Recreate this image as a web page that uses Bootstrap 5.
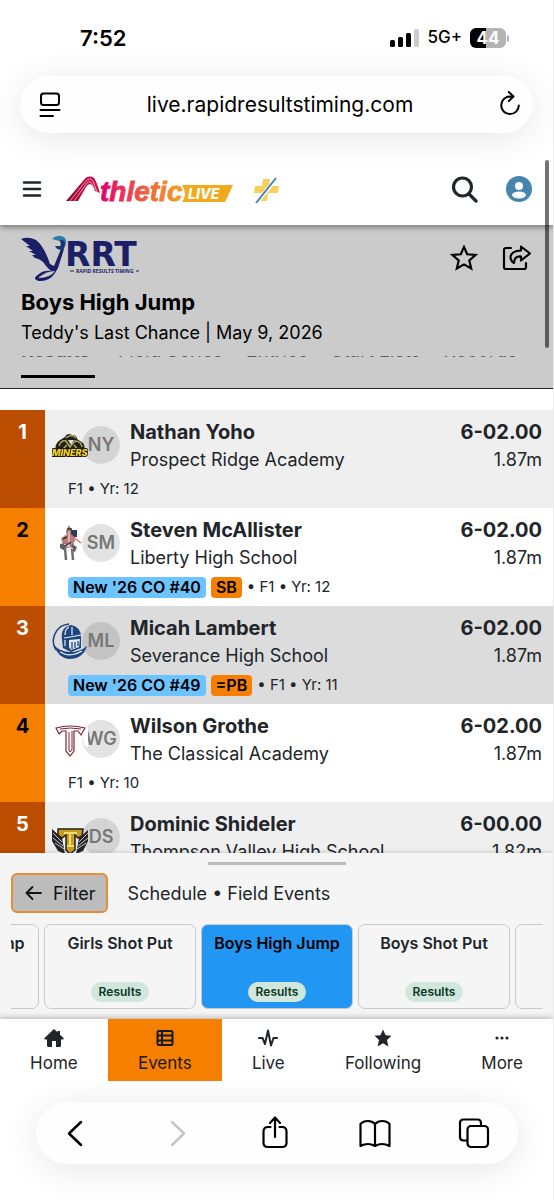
<!DOCTYPE html>
<html lang="en">
<head>
<meta charset="utf-8">
<meta name="viewport" content="width=device-width, initial-scale=1">
<title>Boys High Jump – AthleticLIVE</title>
<link href="https://cdn.jsdelivr.net/npm/bootstrap@5.3.0/dist/css/bootstrap.min.css" rel="stylesheet">
<style>
:root { --orange: #f77f00; --rust: #bb4d00; }
body { font-family: Inter, "Liberation Sans", sans-serif; color: #212529; background: #fff; height: 100vh; overflow: hidden; border-right: 1px solid #e9e9e9; }
svg { display: block; flex: none; }
button { background: none; border: 0; padding: 0; color: inherit; }
a { color: inherit; text-decoration: none; }
.status { height: 76px; padding: 0 44px 0 80px; color: #000; }
.clock { font-size: 22px; font-weight: 600; }
.signal { font-size: 17px; font-weight: 500; }
.battery { width: 36px; height: 20px; border-radius: 6px; background: linear-gradient(90deg, #000 44%, #b4b4b4 44%); color: #fff; font-size: 17px; line-height: 20px; font-weight: 700; text-align: center; }
.battery-tip { width: 2px; height: 7px; border-radius: 0 2px 2px 0; background: #b4b4b4; margin-left: 1px; }
.pill { border-radius: 32px; background: #fefefe; box-shadow: 0 5px 36px rgba(0,0,0,.1); color: #000; }
.address { height: 57px; margin: 0 20px; padding: 0 12px 0 19px; position: relative; }
.address input { border: 0; background: none; text-align: center; font-size: 21px; min-width: 0; color: #000; padding: 0; outline: 0; }
.appbar { height: 73px; margin-top: 19px; padding: 0 21px 0 22px; box-shadow: 0 2px 6px rgba(0,0,0,.45); clip-path: inset(0 0 -10px 0); position: relative; z-index: 2; }
.meet { background: #cbcbcb; border-bottom: 1px solid #222; color: #000; padding: 10px 22px 0 21px; }
.meet h1 { font-size: 22px; line-height: 30px; font-weight: 700; margin: 5px 0 0; }
.meet p { font-size: 18px; line-height: 28px; margin: 2px 0 0; }
.tabs { height: 32px; margin-top: 9px; overflow: hidden; gap: 23px; font-size: 19px; }
.tabs a { height: 22px; line-height: 22px; flex: none; }
.tabs span { display: block; height: 3px; overflow: hidden; opacity: .55; }
.tabs span b { display: block; font-weight: 400; line-height: 22px; margin-top: -16px; }
.tabs .current { border-bottom: 3px solid #000; min-width: 74px; }
.tabs .current b { font-weight: 700; }
.results { flex: 1 1 0; min-height: 0; overflow: hidden; padding-top: 21px; }
.entry { height: 98px; background: #fff; }
.entry:nth-child(odd) { background: #efefef; }
.entry:nth-child(3) { background: #dcdcdc; }
.place { width: 45px; background: var(--orange); color: #000; font-size: 20px; line-height: 28px; font-weight: 700; text-align: center; padding-top: 8px; }
.entry:nth-child(odd) .place { background: var(--rust); color: #fff; }
.who { padding: 8px 11px 4px 7px; min-width: 0; }
.pair { width: 78px; height: 56px; padding-top: 8px; }
.pair svg { position: relative; z-index: 1; }
.initials { width: 38px; height: 38px; margin-left: -6px; border-radius: 50%; background: rgba(0,0,0,.11); color: #777; font-size: 18px; font-weight: 600; line-height: 38px; text-align: center; }
.athlete, .height-mark { font-size: 20px; line-height: 28px; font-weight: 700; }
.team, .metric { font-size: 18px; line-height: 28px; }
.facts { height: 30px; margin-left: 16px; font-size: 15px; gap: 5px; }
.tag { font-size: 16px; font-weight: 600; line-height: 21px; border-radius: 4px; padding: 0 5px; color: #000; background: #6cc3ff; }
.tag-best { background: var(--orange); }
.drawer { background: #f5f5f5; padding: 9px 10px 10px 11px; box-shadow: 0 -1px 4px rgba(0,0,0,.14); position: relative; }
.grip { width: 138px; height: 3px; background: #bdbdc0; }
.filter { height: 40px; border: 2px solid #e88d35; border-radius: 6px; background: #bcbcbc; font-size: 18px; padding: 0 10px 0 12px; gap: 11px; color: #111; }
.crumbs { font-size: 18px; margin-left: 20px; }
.strip { gap: 5px; overflow: hidden; margin-top: 11px; }
.event { flex: 0 0 152px; height: 85px; border: 1px solid #c9c9cc; border-radius: 7px; padding: 5px 0 6px; font-size: 16px; line-height: 26px; font-weight: 600; }
.event.active { background: #2196f3; color: #000; }
.state { font-size: 12px; line-height: 20px; border-radius: 10px; background: #d1e7dd; color: #0a3622; padding: 0 8px; }
.bottomnav { box-shadow: 0 -1px 6px rgba(0,0,0,.3); clip-path: inset(-10px 0 0 0); position: relative; background: #fff; }
.bottomnav a { flex: 1 1 auto; height: 62px; padding-top: 10px; font-size: 17px; line-height: 24px; gap: 4px; }
.bottomnav .active { background: var(--orange); color: #16191c; }
.browserbar { height: 62px; margin: 21px 35px 36px 36px; padding: 0 28px 0 24px; flex: none; }
.browserbar button { width: 32px; display: flex; justify-content: center; }
.thumb { position: absolute; right: 4px; top: 160px; width: 4px; height: 188px; border-radius: 2px; background: rgba(0,0,0,.55); z-index: 5; }
</style>
</head>
<body class="d-flex flex-column position-relative">
<div class="thumb"></div>
<div class="status d-flex align-items-center justify-content-between flex-shrink-0">
  <span class="clock">7:52</span>
  <div class="signal d-flex align-items-center">
    <svg width="29" height="20" viewBox="0 0 29 20"><rect y="12" width="5" height="7" rx="1.5"/><rect x="8" y="9" width="5" height="10" rx="1.5"/><rect x="16" y="5" width="5" height="14" rx="1.5"/><rect x="24" y="1" width="5" height="18" rx="1.5" fill="#ccc"/></svg>
    <span class="mx-2">5G+</span>
    <div class="battery">44</div><div class="battery-tip"></div>
  </div>
</div>
<div class="address pill d-flex align-items-center flex-shrink-0">
  <button aria-label="Page menu"><svg width="22" height="26" viewBox="0 0 22 26" fill="none" stroke="#000" stroke-width="2" stroke-linecap="round"><rect x="2" y="1.500" width="18" height="11.500" rx="2.500"/><path d="M1.500 18H20.500M1.500 24H14"/></svg></button>
  <input class="flex-grow-1" type="text" aria-label="Address" value="live.rapidresultstiming.com">
  <button aria-label="Reload"><svg width="22" height="28" viewBox="0 0 22 28" fill="none" stroke="#000" stroke-width="2" stroke-linecap="round" stroke-linejoin="round"><path d="M11 5.500A8.800 8.800 0 1 0 19.800 14.500M8 5.700L13.500 5.500M9.800 1L14.500 5.500L9.800 10"/></svg></button>
</div>

<header class="appbar d-flex align-items-center flex-shrink-0">
  <button aria-label="Menu"><svg width="20" height="18" viewBox="0 0 20 18" stroke="#212529" stroke-width="2.500" stroke-linecap="round"><path d="M2 2.500H18M2 9H18M2 15.500H18"/></svg></button>
  <a href="#" class="ms-4" aria-label="AthleticLIVE">
    <svg width="168" height="30" viewBox="66 174 168 30">
      <defs><linearGradient id="word" gradientUnits="userSpaceOnUse" x1="100" x2="183"><stop offset="0" stop-color="#e2006d"/><stop offset=".5" stop-color="#ee5b45"/><stop offset="1" stop-color="#f0a322"/></linearGradient><linearGradient id="peak"><stop offset="0" stop-color="#96062e"/><stop offset="1" stop-color="#d5104c"/></linearGradient></defs>
      <path d="M66 201L83 181Q88 174 94 178Q96 180 100 193L95 191Q92 184 90 184Q88 184 86 187L78 201Z" fill="url(#peak)"/>
      <path d="M70 201L86 181Q90 177 93 181L97 192M74 201L87 183Q90 180 92 184L95 190" fill="none" stroke="#fff" stroke-width=".6"/>
      <text x="100" y="201" font-family="Liberation Sans, Arial, sans-serif" font-size="28" font-weight="700" font-style="italic" fill="url(#word)" stroke="url(#word)" stroke-width=".8">thletic</text>
      <path d="M182 185H233L225 202H182Q188 194 182 185Z" fill="#f2a91c"/>
      <text x="188" y="199" font-family="Inter, sans-serif" font-size="14" font-weight="800" font-style="italic" fill="#fff">LIVE</text>
    </svg>
  </a>
  <a href="#" class="ms-3 ps-1" aria-label="Plus"><svg width="26" height="28" viewBox="0 0 26 28"><path d="M9 4H16L15 11H25L24 18H14L13 26H7L8 18H0L1 11H8Z" fill="#f7cf5b"/><path d="M2 28L23 3" stroke="#fff" stroke-width="4"/><path d="M2 28L22 3" stroke="#4682b4" stroke-width="2"/></svg></a>
  <button class="ms-auto" aria-label="Search"><svg width="28" height="28" viewBox="0 0 28 28" fill="none" stroke="#212529" stroke-width="3.200" stroke-linecap="round"><circle cx="12.500" cy="12" r="9"/><path d="M19 19L26 26"/></svg></button>
  <button class="ms-4" aria-label="Account"><svg class="ms-1" width="26" height="26" viewBox="0 0 26 26"><circle cx="13" cy="13" r="13" fill="#4685ad"/><circle cx="13" cy="10" r="4" fill="#fff"/><ellipse cx="13" cy="19" rx="7" ry="3.500" fill="#fff"/></svg></button>
</header>

<section class="meet flex-shrink-0">
  <div class="d-flex">
    <svg width="120" height="47" viewBox="20 235 120 47" role="img" aria-label="Rapid Results Timing">
      <path d="M20 239Q27 236 35 240Q43 246 49 264L53 266L60 249L63 249L57 268L54 273Q48 282 38 281Q30 279 38 274Q43 270 50 271L45 266Q41 259 34 258L31 255H35L28 251H32L25 246H29Z" fill="#1b1f68"/>
      <path d="M38 277Q46 271 54 271Q49 278 38 278Z" fill="#cbcbcb"/>
      <path d="M51 239Q58 233 64 238Q67 243 62 250L56 249Q54 247 59 246L62 242Z" fill="#287cab"/><path d="M59 240Q67 239 62 250Q56 250 54 246L60 246Z" fill="#1b3371"/>
      <text x="64" y="266" font-family="DejaVu Sans, sans-serif" font-size="33" font-weight="700" fill="#1b1f68">RRT</text>
      <text x="75" y="273" font-family="Open Sans, sans-serif" font-size="5" font-weight="700" fill="#1b1f68">RAPID RESULTS TIMING</text>
      <path d="M69 271H73M135 271H138" stroke="#1b1f68"/>
    </svg>
    <button class="ms-auto" aria-label="Follow"><svg width="28" height="28" viewBox="0 0 28 28" fill="none" stroke="#000" stroke-width="2.200"><path d="M14 2L17.200 9.300L25.500 10L19.300 15.500L21.200 23.500L14 19.400L6.800 23.500L8.700 15.500L2.500 10L10.800 9.300Z"/></svg></button>
    <button class="ms-4" aria-label="Share"><svg width="29" height="28" viewBox="0 0 29 28" fill="none" stroke="#000" stroke-width="2.200" stroke-linecap="round" stroke-linejoin="round"><path d="M9 3H4Q2 3 2 5V22Q2 24 4 24H22Q24 24 24 22V18"/><path d="M19 1.500L28 8.500L19 15.500V11.500Q12 11 12 18Q8.500 16 8.500 12Q9 6 19 5.500Z"/></svg></button>
  </div>
  <h1>Boys High Jump</h1>
  <p>Teddy's Last Chance | May 9, 2026</p>
  <nav class="tabs d-flex" aria-label="Event pages">
    <a href="#" class="current" aria-current="page"><span><b>Results</b></span></a>
    <a href="#"><span><b>Field Series</b></span></a>
    <a href="#"><span><b>Entries</b></span></a>
    <a href="#"><span><b>Start Lists</b></span></a>
    <a href="#"><span><b>Records</b></span></a>
  </nav>
</section>

<main class="results">
<ol class="list-unstyled m-0">
  <li class="entry d-flex">
    <div class="place">1</div>
    <div class="who flex-grow-1">
      <div class="d-flex">
        <div class="pair d-flex"><svg width="36" height="38" viewBox="0 0 36 38" aria-hidden="true"><path d="M4 25Q2 18 8 14L13 11Q15 6 20 9Q25 9 25 13L31 17Q34 21 31 27Z" fill="#20201d"/><path d="M7 20Q9 14 14 15L18 21L23 15Q29 15 30 21M14 12Q20 7 24 12M10 24L15 19M26 24L22 19" fill="none" stroke="#b7aa57" stroke-width="1.500"/><path d="M16 14H22L19 19Z" fill="#ddd"/><text x="0" y="30" font-family="Inter, sans-serif" font-size="9" font-weight="800" font-style="italic" fill="#f5d526" stroke="#1a1a1a" stroke-width="2" paint-order="stroke">MINERS</text></svg><div class="initials">NY</div></div>
        <div class="flex-grow-1"><div class="athlete">Nathan Yoho</div><div class="team">Prospect Ridge Academy</div></div>
        <div class="text-end"><div class="height-mark">6-02.00</div><div class="metric">1.87m</div></div>
      </div>
      <div class="facts d-flex align-items-center">F1 • Yr: 12</div>
    </div>
  </li>
  <li class="entry d-flex">
    <div class="place">2</div>
    <div class="who flex-grow-1">
      <div class="d-flex">
        <div class="pair d-flex"><svg width="36" height="38" viewBox="0 0 36 38" aria-hidden="true"><path d="M14 7L17 1L20 7V13H15Z" fill="#9b7777"/><path d="M19 6H25V13H19Z" fill="#303955"/><path d="M9 14L18 9L23 14L21 24H12Z" fill="#a98684"/><path d="M16 9L29 19M12 12L23 17M10 16L20 21" stroke="#d66e72" stroke-width="1.500"/><path d="M8 20L14 19L13 27L8 24ZM20 20L25 23L23 28L19 26Z" fill="#636065"/><path d="M13 24L14 36M20 24L21 36" stroke="#726a69" stroke-width="2.500"/><path d="M17 7V22M12 20L21 25" stroke="#eee" stroke-width="1"/><path d="M11 15L15 13M13 22L19 18M15 5H20" stroke="#3c3137" stroke-width="1.500"/></svg><div class="initials">SM</div></div>
        <div class="flex-grow-1"><div class="athlete">Steven McAllister</div><div class="team">Liberty High School</div></div>
        <div class="text-end"><div class="height-mark">6-02.00</div><div class="metric">1.87m</div></div>
      </div>
      <div class="facts d-flex align-items-center"><span class="tag">New '26 CO #40</span><span class="tag tag-best">SB</span><span>• F1 • Yr: 12</span></div>
    </div>
  </li>
  <li class="entry d-flex">
    <div class="place">3</div>
    <div class="who flex-grow-1">
      <div class="d-flex">
        <div class="pair d-flex"><svg width="36" height="38" viewBox="0 0 36 38" aria-hidden="true"><path d="M17 2A17 17 0 0 0 4 28" fill="none" stroke="#1d4580" stroke-width="1.500"/><path d="M2 23Q8 30 18 30Q28 30 35 24Q31 37 17 37Q6 36 2 23Z" fill="#1d4580"/><path d="M10 18Q8 5 19 3Q29 5 29 15V26L19 30L11 26Z" fill="#1d4580"/><path d="M17 18L28 17L27 25L19 28L17 25Z" fill="#e5e9ef"/><path d="M20 20V27M23 20V26M26 19V24" stroke="#1d4580" stroke-width="1.300"/><path d="M13 13Q13 7 17 5M20 13V5M12 16L18 15L29 13M8 30Q18 36 30 29M13 18V24" fill="none" stroke="#e8eef5" stroke-width="1.200"/></svg><div class="initials">ML</div></div>
        <div class="flex-grow-1"><div class="athlete">Micah Lambert</div><div class="team">Severance High School</div></div>
        <div class="text-end"><div class="height-mark">6-02.00</div><div class="metric">1.87m</div></div>
      </div>
      <div class="facts d-flex align-items-center"><span class="tag">New '26 CO #49</span><span class="tag tag-best">=PB</span><span>• F1 • Yr: 11</span></div>
    </div>
  </li>
  <li class="entry d-flex">
    <div class="place">4</div>
    <div class="who flex-grow-1">
      <div class="d-flex">
        <div class="pair d-flex"><svg width="36" height="38" viewBox="0 0 36 38" aria-hidden="true"><path d="M29 9L36 7V28L32 25Z" fill="#fff"/><path d="M4 8Q18 4 33 8L29 15L26 11H22V31L18 36L14 31V11H10L7 14Z" fill="#fff" stroke="#7d2630" stroke-width="1.200"/><path d="M8 9Q18 7 29 9M17 12V30L18 32L20 30V11" fill="none" stroke="#7d2630"/></svg><div class="initials">WG</div></div>
        <div class="flex-grow-1"><div class="athlete">Wilson Grothe</div><div class="team">The Classical Academy</div></div>
        <div class="text-end"><div class="height-mark">6-02.00</div><div class="metric">1.87m</div></div>
      </div>
      <div class="facts d-flex align-items-center">F1 • Yr: 10</div>
    </div>
  </li>
  <li class="entry d-flex">
    <div class="place">5</div>
    <div class="who flex-grow-1">
      <div class="d-flex">
        <div class="pair d-flex"><svg width="36" height="38" viewBox="0 0 36 38" aria-hidden="true"><path d="M0 11L10 20L13 36L6 33L0 23ZM37 11L27 20L24 36L31 33L36 23Z" fill="#25232a"/><path d="M1 15L10 24M1 20L11 28M3 25L12 31M36 15L27 24M36 20L26 28M34 25L25 31" stroke="#c9c7bd" stroke-width="1"/><path d="M6 11H31L30 18L26 20L23 17V32L18 36L14 32V17L10 20L6 17Z" fill="#c59d22" stroke="#252018" stroke-width="1.500"/><path d="M12 15H25M18 15V28M15 28H22" stroke="#f4dc74" stroke-width="2"/></svg><div class="initials">DS</div></div>
        <div class="flex-grow-1"><div class="athlete">Dominic Shideler</div><div class="team">Thompson Valley High School</div></div>
        <div class="text-end"><div class="height-mark">6-00.00</div><div class="metric">1.82m</div></div>
      </div>
    </div>
  </li>
</ol>
</main>

<section class="drawer flex-shrink-0">
  <div class="grip mx-auto"></div>
  <div class="d-flex align-items-center mt-2">
    <button class="filter d-flex align-items-center"><svg width="17" height="16" viewBox="0 0 17 16" fill="none" stroke="#111" stroke-width="1.800" stroke-linecap="round" stroke-linejoin="round"><path d="M16 8H1.500M7.500 2L1.500 8L7.500 14"/></svg>Filter</button>
    <span class="crumbs">Schedule • Field Events</span>
  </div>
  <div class="strip d-flex justify-content-center">
    <a href="#" class="event d-flex flex-column align-items-center justify-content-between"><span>Girls High Jump</span></a>
    <a href="#" class="event d-flex flex-column align-items-center justify-content-between"><span>Girls Shot Put</span><span class="state">Results</span></a>
    <a href="#" class="event active d-flex flex-column align-items-center justify-content-between"><span>Boys High Jump</span><span class="state">Results</span></a>
    <a href="#" class="event d-flex flex-column align-items-center justify-content-between"><span>Boys Shot Put</span><span class="state">Results</span></a>
    <a href="#" class="event" aria-label="Next event"></a>
  </div>
</section>

<nav class="bottomnav d-flex flex-shrink-0" aria-label="Main">
  <a href="#" class="d-flex flex-column align-items-center"><svg width="20" height="18" viewBox="0 0 20 18" fill="#212529"><path d="M10 0L13.500 3.300V2H16V5.700L19.500 9Q20 10 19 10.500H17V16.500Q17 18 15.500 18H12V12H8V18H4.500Q3 18 3 16.500V10.500H1Q0 10 .5 9Z"/></svg>Home</a>
  <a href="#" class="active d-flex flex-column align-items-center"><svg width="18" height="18" viewBox="0 0 18 18" fill="none" stroke="#16191c" stroke-width="2"><rect x="1.500" y="2" width="15" height="14" rx="1.500"/><path d="M6 2V16M2 6.500H16M2 11.500H16"/></svg>Events</a>
  <a href="#" class="d-flex flex-column align-items-center"><svg width="20" height="18" viewBox="0 0 20 18" fill="none" stroke="#212529" stroke-width="2" stroke-linecap="round" stroke-linejoin="round"><path d="M1 9H4.500L7 15L10 1.500L13 16.500L15.500 9H19"/></svg>Live</a>
  <a href="#" class="d-flex flex-column align-items-center"><svg width="18" height="18" viewBox="0 0 18 18" fill="#212529"><path d="M9 .5L11.600 6.200L17.500 6.800L13 11L14.400 17.500L9 14.200L3.600 17.500L5 11L.5 6.800L6.400 6.200Z"/></svg>Following</a>
  <a href="#" class="d-flex flex-column align-items-center"><svg width="18" height="18" viewBox="0 0 18 18" fill="#212529"><circle cx="4" cy="9" r="1.600"/><circle cx="9" cy="9" r="1.600"/><circle cx="14" cy="9" r="1.600"/></svg>More</a>
</nav>

<div class="browserbar pill d-flex align-items-center justify-content-between">
  <button aria-label="Back"><svg width="24" height="34" viewBox="0 0 24 34" fill="none" stroke="#000" stroke-width="2.500" stroke-linecap="round" stroke-linejoin="round"><path d="M17 6L5 17.500L17 29"/></svg></button>
  <button aria-label="Forward" disabled><svg width="24" height="34" viewBox="0 0 24 34" fill="none" stroke="#c5c5c5" stroke-width="2.500" stroke-linecap="round" stroke-linejoin="round"><path d="M8 6L20 17.500L8 29"/></svg></button>
  <button aria-label="Share page"><svg width="28" height="34" viewBox="0 0 28 34" fill="none" stroke="#000" stroke-width="2.200" stroke-linecap="round" stroke-linejoin="round"><path d="M9.500 11H7Q2.500 11 2.500 15.500V27Q2.500 31 7 31H21Q25.500 31 25.500 27V15.500Q25.500 11 21 11H18.500M14 21V2M9 7L14 1.500L19 7"/></svg></button>
  <button aria-label="Bookmarks"><svg width="32" height="34" viewBox="0 0 32 34" fill="none" stroke="#000" stroke-width="2.200" stroke-linejoin="round"><path d="M16 8Q13 5 9 5Q4 5 1.500 8V30Q9 26 16 30Q23 26 30.500 30V8Q28 5 23 5Q19 5 16 8V30"/></svg></button>
  <button aria-label="Tabs"><svg width="32" height="34" viewBox="0 0 32 34" fill="none" stroke="#000" stroke-width="2.200"><rect x="9.500" y="10" width="20.500" height="21" rx="3.500"/><path d="M9.500 24.500H5.500Q2 24.500 2 21V7Q2 3.500 5.500 3.500H19.500Q23 3.500 23 7V10"/></svg></button>
</div>
<script src="https://cdn.jsdelivr.net/npm/bootstrap@5.3.0/dist/js/bootstrap.bundle.min.js"></script>
</body>
</html>
